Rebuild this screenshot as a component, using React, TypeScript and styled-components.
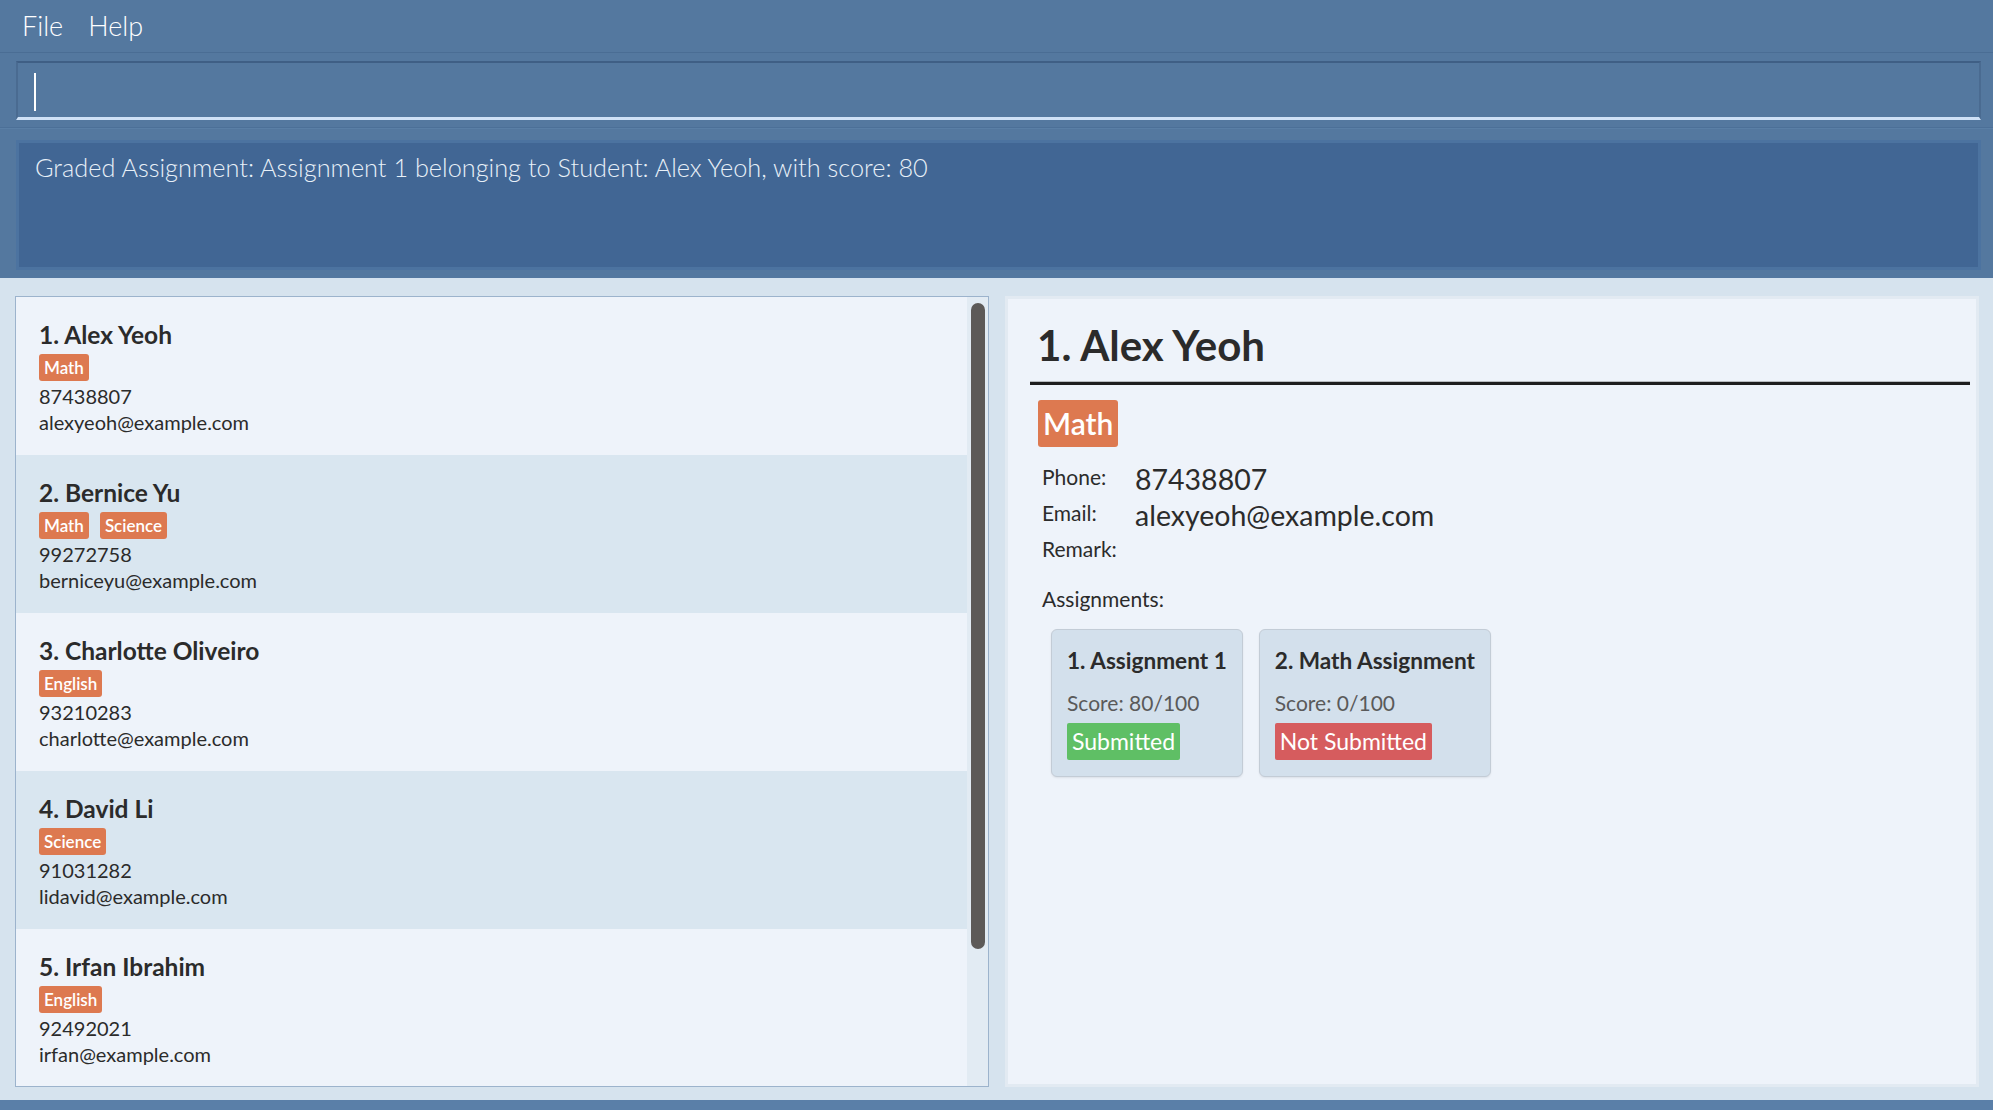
import styled, { createGlobalStyle } from "styled-components";

type Person = {
  id: number;
  name: string;
  tags: string[];
  phone: string;
  email: string;
};

type Assignment = {
  id: number;
  title: string;
  score: number;
  submitted: boolean;
};

const persons: Person[] = [
  { id: 1, name: "Alex Yeoh", tags: ["Math"], phone: "87438807", email: "alexyeoh@example.com" },
  { id: 2, name: "Bernice Yu", tags: ["Math", "Science"], phone: "99272758", email: "berniceyu@example.com" },
  { id: 3, name: "Charlotte Oliveiro", tags: ["English"], phone: "93210283", email: "charlotte@example.com" },
  { id: 4, name: "David Li", tags: ["Science"], phone: "91031282", email: "lidavid@example.com" },
  { id: 5, name: "Irfan Ibrahim", tags: ["English"], phone: "92492021", email: "irfan@example.com" },
];

const assignments: Assignment[] = [
  { id: 1, title: "Assignment 1", score: 80, submitted: true },
  { id: 2, title: "Math Assignment", score: 0, submitted: false },
];

const GlobalStyle = createGlobalStyle`
  html, body {
    margin: 0;
    padding: 0;
    background: #d6e3ee;
  }
  * {
    box-sizing: border-box;
  }
`;

export default function App() {
  const selected = persons[0];

  return (
    <>
      <GlobalStyle />
      <Window>
        <MenuBar>
          <MenuItem>File</MenuItem>
          <MenuItem>Help</MenuItem>
        </MenuBar>

        <CommandSection>
          <CommandBox>
            <Caret />
          </CommandBox>
        </CommandSection>

        <ResultSection>
          <ResultBox>
            Graded Assignment: Assignment 1 belonging to Student: Alex Yeoh, with score: 80
          </ResultBox>
        </ResultSection>

        <Main>
          <ListPanel>
            <ListScroll>
              {persons.map((p, i) => (
                <PersonCell key={p.id} $alt={i % 2 === 1}>
                  <PersonName>
                    {p.id}. {p.name}
                  </PersonName>
                  <TagRow>
                    {p.tags.map((t) => (
                      <Tag key={t}>{t}</Tag>
                    ))}
                  </TagRow>
                  <CellText>{p.phone}</CellText>
                  <CellText>{p.email}</CellText>
                </PersonCell>
              ))}
            </ListScroll>
            <ScrollTrack>
              <ScrollThumb />
            </ScrollTrack>
          </ListPanel>

          <DetailPanel>
            <DetailName>
              {selected.id}. {selected.name}
            </DetailName>
            <Divider />
            <DetailTags>
              {selected.tags.map((t) => (
                <BigTag key={t}>{t}</BigTag>
              ))}
            </DetailTags>
            <InfoGrid>
              <InfoLabel>Phone:</InfoLabel>
              <InfoValue>{selected.phone}</InfoValue>
              <InfoLabel>Email:</InfoLabel>
              <InfoValue>{selected.email}</InfoValue>
              <InfoLabel>Remark:</InfoLabel>
              <InfoValue />
            </InfoGrid>
            <SectionLabel>Assignments:</SectionLabel>
            <CardRow>
              {assignments.map((a) => (
                <AssignmentCard key={a.id}>
                  <CardTitle>
                    {a.id}. {a.title}
                  </CardTitle>
                  <CardScore>Score: {a.score}/100</CardScore>
                  <StatusBadge $ok={a.submitted}>
                    {a.submitted ? "Submitted" : "Not Submitted"}
                  </StatusBadge>
                </AssignmentCard>
              ))}
            </CardRow>
          </DetailPanel>
        </Main>

        <StatusBar />
      </Window>
    </>
  );
}

// Styled Components
const Window = styled.div`
  width: 1993px;
  height: 1110px;
  display: flex;
  flex-direction: column;
  font-family: Lato, "Open Sans", sans-serif;
  background: #d6e3ee;
  overflow: hidden;
`;

const MenuBar = styled.div`
  height: 53px;
  flex: none;
  display: flex;
  align-items: center;
  gap: 25px;
  padding: 0 0 2px 22px;
  background: #54789f;
  border-bottom: 1px solid #4a6d94;
`;

const MenuItem = styled.span`
  color: #ffffff;
  font-size: 27px;
  font-weight: 300;
`;

const CommandSection = styled.div`
  height: 75px;
  flex: none;
  padding: 8px 12px 0 16px;
  background: #54789f;
  border-bottom: 1px solid #4c7098;
`;

const CommandBox = styled.div`
  height: 59px;
  background: #54789f;
  border-top: 2px solid #3f5f85;
  border-left: 2px solid #4a6b91;
  border-right: 2px solid #4a6b91;
  border-bottom: 3px solid #cfe1f6;
  padding: 10px 0 0 16px;
`;

const Caret = styled.div`
  width: 2px;
  height: 38px;
  background: #ffffff;
`;

const ResultSection = styled.div`
  height: 150px;
  flex: none;
  padding: 11px 12px 8px 16px;
  background: #54789f;
  border-top: 1px solid #5a7fa6;
`;

const ResultBox = styled.div`
  height: 100%;
  background: #416694;
  border: 3px solid #4c73a0;
  padding: 9px 16px;
  color: #e8f0f8;
  font-size: 25.3px;
  font-weight: 300;
`;

const Main = styled.div`
  flex: 1;
  display: grid;
  grid-template-columns: 974px 1fr;
  gap: 16px;
  padding: 18px 14px 13px 15px;
  min-height: 0;
`;

const ListPanel = styled.div`
  display: flex;
  border: 1px solid #9cb3cc;
  background: #eef3fa;
  overflow: hidden;
`;

const ListScroll = styled.div`
  flex: 1;
  display: flex;
  flex-direction: column;
`;

const PersonCell = styled.div<{ $alt: boolean }>`
  height: 158px;
  flex: none;
  padding: 21px 23px 0;
  background: ${({ $alt }) => ($alt ? "#d9e6f0" : "#eef3fa")};
  display: flex;
  flex-direction: column;
`;

const PersonName = styled.div`
  font-size: 24.5px;
  font-weight: 700;
  color: #2b2b2b;
  line-height: 34px;
`;

const TagRow = styled.div`
  display: flex;
  gap: 11px;
  margin: 2px 0 2px;
`;

const Tag = styled.span`
  background: #dd7950;
  color: #ffffff;
  font-size: 17px;
  font-weight: 600;
  line-height: 27px;
  padding: 0 5px;
  border-radius: 3px;
`;

const CellText = styled.div`
  font-size: 20px;
  color: #2b2b2b;
  line-height: 26px;
`;

const ScrollTrack = styled.div`
  width: 21px;
  flex: none;
  background: #e2ebf3;
  padding: 6px 3px 0 4px;
`;

const ScrollThumb = styled.div`
  height: 646px;
  background: #5d5a58;
  border-radius: 7px;
`;

const DetailPanel = styled.div`
  background: #eef3fa;
  border: 3px solid #e2eaf2;
  padding: 20px 6px 0 22px;
  display: flex;
  flex-direction: column;
  align-items: flex-start;
`;

const DetailName = styled.div`
  font-size: 42px;
  font-weight: 700;
  color: #2b2b2b;
  line-height: 52px;
  padding-left: 7px;
`;

const Divider = styled.div`
  align-self: stretch;
  margin-top: 10px;
  height: 4px;
  border-top: 1px solid #b8bcc0;
  border-bottom: 3px solid #1e1e1e;
`;

const DetailTags = styled.div`
  display: flex;
  gap: 10px;
  margin: 15px 0 0 8px;
`;

const BigTag = styled.span`
  background: #dd7950;
  color: #ffffff;
  font-size: 30px;
  font-weight: 600;
  line-height: 47px;
  padding: 0 5px;
  border-radius: 3px;
`;

const InfoGrid = styled.div`
  display: grid;
  grid-template-columns: 93px auto;
  grid-auto-rows: 36px;
  align-items: start;
  margin: 14px 0 0 12px;
`;

const InfoLabel = styled.div`
  font-size: 21px;
  color: #2b2b2b;
  line-height: 31px;
`;

const InfoValue = styled.div`
  font-size: 28.5px;
  color: #2b2b2b;
  line-height: 36px;
`;

const SectionLabel = styled.div`
  font-size: 21px;
  color: #2b2b2b;
  margin: 17px 0 0 12px;
`;

const CardRow = styled.div`
  display: flex;
  gap: 16px;
  margin: 18px 0 0 21px;
`;

const AssignmentCard = styled.div`
  background: #d3e0ec;
  border: 1px solid #c3ccd6;
  border-radius: 6px;
  box-shadow: 0 1px 2px rgba(0, 0, 0, 0.08);
  padding: 16px 15px 16px;
  display: flex;
  flex-direction: column;
  align-items: flex-start;
`;

const CardTitle = styled.div`
  font-size: 22.6px;
  font-weight: 700;
  color: #2b2b2b;
  line-height: 30px;
`;

const CardScore = styled.div`
  font-size: 21px;
  color: #5a5a5a;
  line-height: 30px;
  margin-top: 12px;
`;

const StatusBadge = styled.span<{ $ok: boolean }>`
  margin-top: 5px;
  background: ${({ $ok }) => ($ok ? "#5fbf65" : "#d65c5e")};
  color: #ffffff;
  font-size: 23px;
  line-height: 37px;
  padding: 0 5px;
  border-radius: 2px;
`;

const StatusBar = styled.div`
  height: 10px;
  flex: none;
  background: #5a7fa8;
`;
